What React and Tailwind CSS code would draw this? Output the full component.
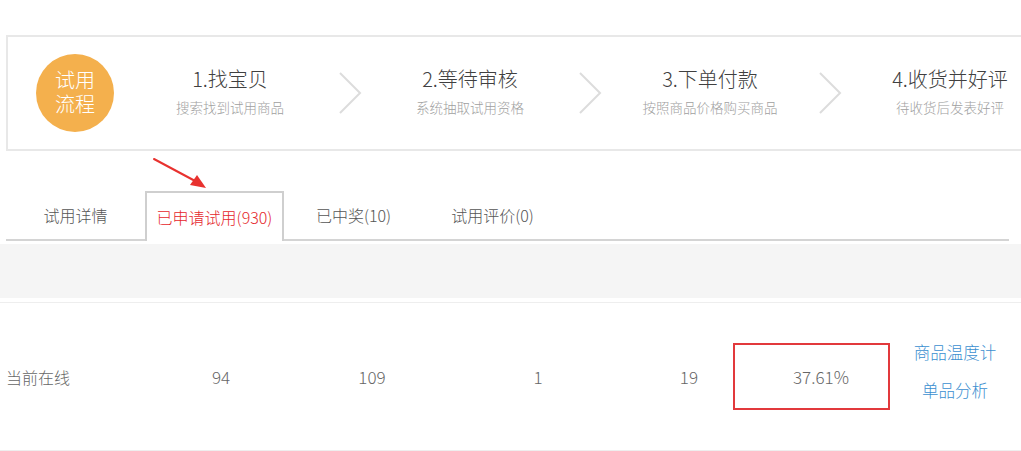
import React from 'react'

const steps = [
  { title: '1.找宝贝', sub: '搜索找到试用商品' },
  { title: '2.等待审核', sub: '系统抽取试用资格' },
  { title: '3.下单付款', sub: '按照商品价格购买商品' },
  { title: '4.收货并好评', sub: '待收货后发表好评' },
]

const tabs = [
  { label: '试用详情' },
  { label: '已申请试用(930)', active: true },
  { label: '已中奖(10)' },
  { label: '试用评价(0)' },
]

function Chevron() {
  return (
    <div className="w-[60px] flex justify-center">
      <svg width="24" height="42" viewBox="0 0 24 42">
        <polyline points="2,1 22,21 2,41" fill="none" stroke="#dcdcdc" strokeWidth="2" />
      </svg>
    </div>
  )
}

export default function App() {
  return (
    <div
      className="relative w-[1021px] h-[451px] overflow-hidden bg-white font-light"
      style={{ fontFamily: '"Noto Sans CJK SC", "Liberation Sans", sans-serif' }}
    >
      {/* trial process box */}
      <div className="pt-[35px] pl-[6px]">
        <div className="w-[1040px] h-[116px] border-2 border-[#e8e8e8] flex items-center">
          <div
            className="ml-[28px] w-[78px] h-[78px] rounded-full bg-[#f4b04d] flex flex-col items-center justify-center text-white text-[20px] leading-[24px]"
            style={{ fontFamily: '"Liberation Sans", "Noto Sans CJK SC", sans-serif' }}
          >
            <span>试用</span>
            <span>流程</span>
          </div>
          <div className="ml-[26px] flex items-center">
            {steps.map((s, i) => (
              <React.Fragment key={s.title}>
                {i > 0 && <Chevron />}
                <div className="w-[180px] pb-[4px] flex flex-col items-center">
                  <div className="text-[20px] leading-[26px] text-[#404040]">{s.title}</div>
                  <div className="mt-[6px] text-[13.5px] leading-[18px] text-[#a0a0a0]">{s.sub}</div>
                </div>
              </React.Fragment>
            ))}
          </div>
        </div>
      </div>

      {/* tabs */}
      <div className="mt-[40px] ml-[6px] w-[1003px] h-[50px] border-b-2 border-[#d4d4d4] flex items-end">
        {tabs.map(t => (
          <div
            key={t.label}
            className={
              t.active
                ? 'w-[139px] h-[50px] -mb-[2px] border-2 border-b-0 border-[#cfcfcf] bg-white flex items-center justify-center text-[16px] text-[#e5262b]'
                : 'w-[139px] h-[48px] flex items-center justify-center text-[16px] text-[#555]'
            }
          >
            {t.label}
          </div>
        ))}
      </div>

      {/* gray band */}
      <div className="mt-[3px] h-[54px] bg-[#f5f5f5]" />
      <div className="mt-[4px] h-px bg-[#eeeeee]" />

      {/* data row */}
      <div className="h-[148px] border-b border-[#eeeeee] flex items-center text-[17px] text-[#666]">
        <div className="w-[146px] pl-[6px] text-[16px]">当前在线</div>
        <div className="w-[150px] text-center">94</div>
        <div className="w-[152px] text-center">109</div>
        <div className="w-[180px] text-center">1</div>
        <div className="w-[105px] text-right pr-[35px]">19</div>
        <div className="w-[157px] h-[67px] border-2 border-[#e2393c] flex items-center pl-[58px]">37.61%</div>
        <div className="w-[130px] flex flex-col items-center gap-[14px] text-[16.5px] text-[#3b8fd0] leading-[24px] -mt-[12px]">
          <span>商品温度计</span>
          <span>单品分析</span>
        </div>
      </div>

      {/* red annotation arrow */}
      <svg className="absolute left-[150px] top-[155px]" width="64" height="40" viewBox="0 0 64 40">
        <path d="M4 4 L47 27" stroke="#e8322f" strokeWidth="2" strokeLinecap="round" />
        <polygon points="56,33 40,30 47,20" fill="#e8322f" />
      </svg>
    </div>
  )
}
